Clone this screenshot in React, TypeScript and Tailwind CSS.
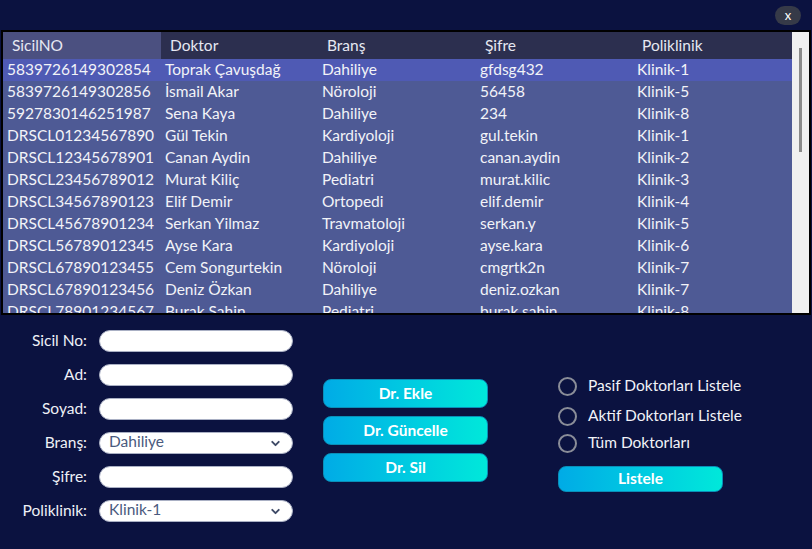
import { ChevronDown } from 'lucide-react';

// Doctor rows shown in the grid
const ROWS = [
  ['5839726149302854', 'Toprak Çavuşdağ', 'Dahiliye', 'gfdsg432', 'Klinik-1'],
  ['5839726149302856', 'İsmail Akar', 'Nöroloji', '56458', 'Klinik-5'],
  ['5927830146251987', 'Sena Kaya', 'Dahiliye', '234', 'Klinik-8'],
  ['DRSCL01234567890', 'Gül Tekin', 'Kardiyoloji', 'gul.tekin', 'Klinik-1'],
  ['DRSCL12345678901', 'Canan Aydin', 'Dahiliye', 'canan.aydin', 'Klinik-2'],
  ['DRSCL23456789012', 'Murat Kiliç', 'Pediatri', 'murat.kilic', 'Klinik-3'],
  ['DRSCL34567890123', 'Elif Demir', 'Ortopedi', 'elif.demir', 'Klinik-4'],
  ['DRSCL45678901234', 'Serkan Yilmaz', 'Travmatoloji', 'serkan.y', 'Klinik-5'],
  ['DRSCL56789012345', 'Ayse Kara', 'Kardiyoloji', 'ayse.kara', 'Klinik-6'],
  ['DRSCL67890123455', 'Cem Songurtekin', 'Nöroloji', 'cmgrtk2n', 'Klinik-7'],
  ['DRSCL67890123456', 'Deniz Özkan', 'Dahiliye', 'deniz.ozkan', 'Klinik-7'],
  ['DRSCL78901234567', 'Burak Sahin', 'Pediatri', 'burak.sahin', 'Klinik-8'],
];

const HEADERS = ['SicilNO', 'Doktor', 'Branş', 'Şifre', 'Poliklinik'];
const COLS = ['w-[158px]', 'w-[157px]', 'w-[158px]', 'w-[157px]', 'flex-1'];

const FIELDS: { label: string; select?: string }[] = [
  { label: 'Sicil No:' },
  { label: 'Ad:' },
  { label: 'Soyad:' },
  { label: 'Branş:', select: 'Dahiliye' },
  { label: 'Şifre:' },
  { label: 'Poliklinik:', select: 'Klinik-1' },
];

const RADIOS = [
  { label: 'Pasif Doktorları Listele', mt: 'mt-0' },
  { label: 'Aktif Doktorları Listele', mt: 'mt-[10px]' },
  { label: 'Tüm Doktorları', mt: 'mt-[7px]' },
];

const btn =
  'rounded-[8px] bg-gradient-to-r from-[#00abe6] to-[#00e8da] border border-[#0a8fb8] text-white font-bold text-[15.5px] flex items-center justify-center';

export default function App() {
  return (
    <div
      className="w-[812px] h-[549px] bg-[#0b1240] flex flex-col overflow-hidden text-[15.5px]"
      style={{ fontFamily: 'Lato, "Noto Sans", sans-serif' }}
    >
      {/* Top bar */}
      <div className="h-[30px] flex items-start justify-end pr-[11px] pt-[6px]">
        <div className="w-[26px] h-[19px] rounded-full bg-[#363a48] text-white text-[13px] leading-none flex items-center justify-center">
          x
        </div>
      </div>

      {/* Grid */}
      <div className="ml-[1px] w-[810px] h-[285px] border-2 border-black flex">
        <div className="flex-1 overflow-hidden flex flex-col">
          <div className="h-[27px] shrink-0 flex bg-[#2c2f4f] text-[#e6e8f2]">
            {HEADERS.map((h, i) => (
              <div
                key={h}
                className={`${COLS[i]} pl-[9px] flex items-center ${i === 0 ? 'bg-[#4b5080]' : ''}`}
              >
                {h}
              </div>
            ))}
          </div>
          {ROWS.map((r, ri) => (
            <div
              key={r[0]}
              className={`h-[22px] shrink-0 flex text-[#f2f3f8] ${ri === 0 ? 'bg-[#4f5ab4]' : 'bg-[#4e5a95]'}`}
            >
              {r.map((c, i) => (
                <div key={i} className={`${COLS[i]} pl-[4px] flex items-center whitespace-nowrap`}>
                  {c}
                </div>
              ))}
            </div>
          ))}
        </div>
        <div className="w-[17px] bg-[#f0f0f0] flex justify-center pt-[16px]">
          <div className="w-[3px] h-[104px] bg-[#8a8a8a]" />
        </div>
      </div>

      {/* Bottom controls */}
      <div className="flex items-start">
        {/* Form */}
        <div className="pt-[15px] flex flex-col gap-[12px]">
          {FIELDS.map((f) => (
            <div key={f.label} className="flex items-center h-[22px]">
              <div className="w-[87px] text-right text-[#eef0f6] whitespace-nowrap">{f.label}</div>
              <div className="ml-[12px] w-[194px] h-[22px] rounded-full bg-white border border-[#aab0c4] flex items-center pl-[9px] pr-[10px]">
                {f.select && (
                  <>
                    <span className="flex-1 text-[#4a5a7e] leading-none -mt-[2px]">{f.select}</span>
                    <ChevronDown size={13} strokeWidth={3.5} className="text-[#3e4a66]" />
                  </>
                )}
              </div>
            </div>
          ))}
        </div>

        {/* Action buttons */}
        <div className="ml-[30px] mt-[64px] flex flex-col gap-[8px]">
          <div className={`${btn} w-[165px] h-[29px]`}>Dr. Ekle</div>
          <div className={`${btn} w-[165px] h-[29px]`}>Dr. Güncelle</div>
          <div className={`${btn} w-[165px] h-[29px]`}>Dr. Sil</div>
        </div>

        {/* Filter */}
        <div className="ml-[70px] mt-[61px] flex flex-col">
          {RADIOS.map((r) => (
            <div key={r.label} className={`flex items-center h-[20px] ${r.mt}`}>
              <div className="w-[19px] h-[19px] shrink-0 rounded-full border-2 border-[#8a8d98]" />
              <span className="ml-[11px] text-[#f2f3f8] leading-none whitespace-nowrap">{r.label}</span>
            </div>
          ))}
          <div className={`${btn} w-[165px] h-[26px] mt-[13px]`}>Listele</div>
        </div>
      </div>
    </div>
  );
}
